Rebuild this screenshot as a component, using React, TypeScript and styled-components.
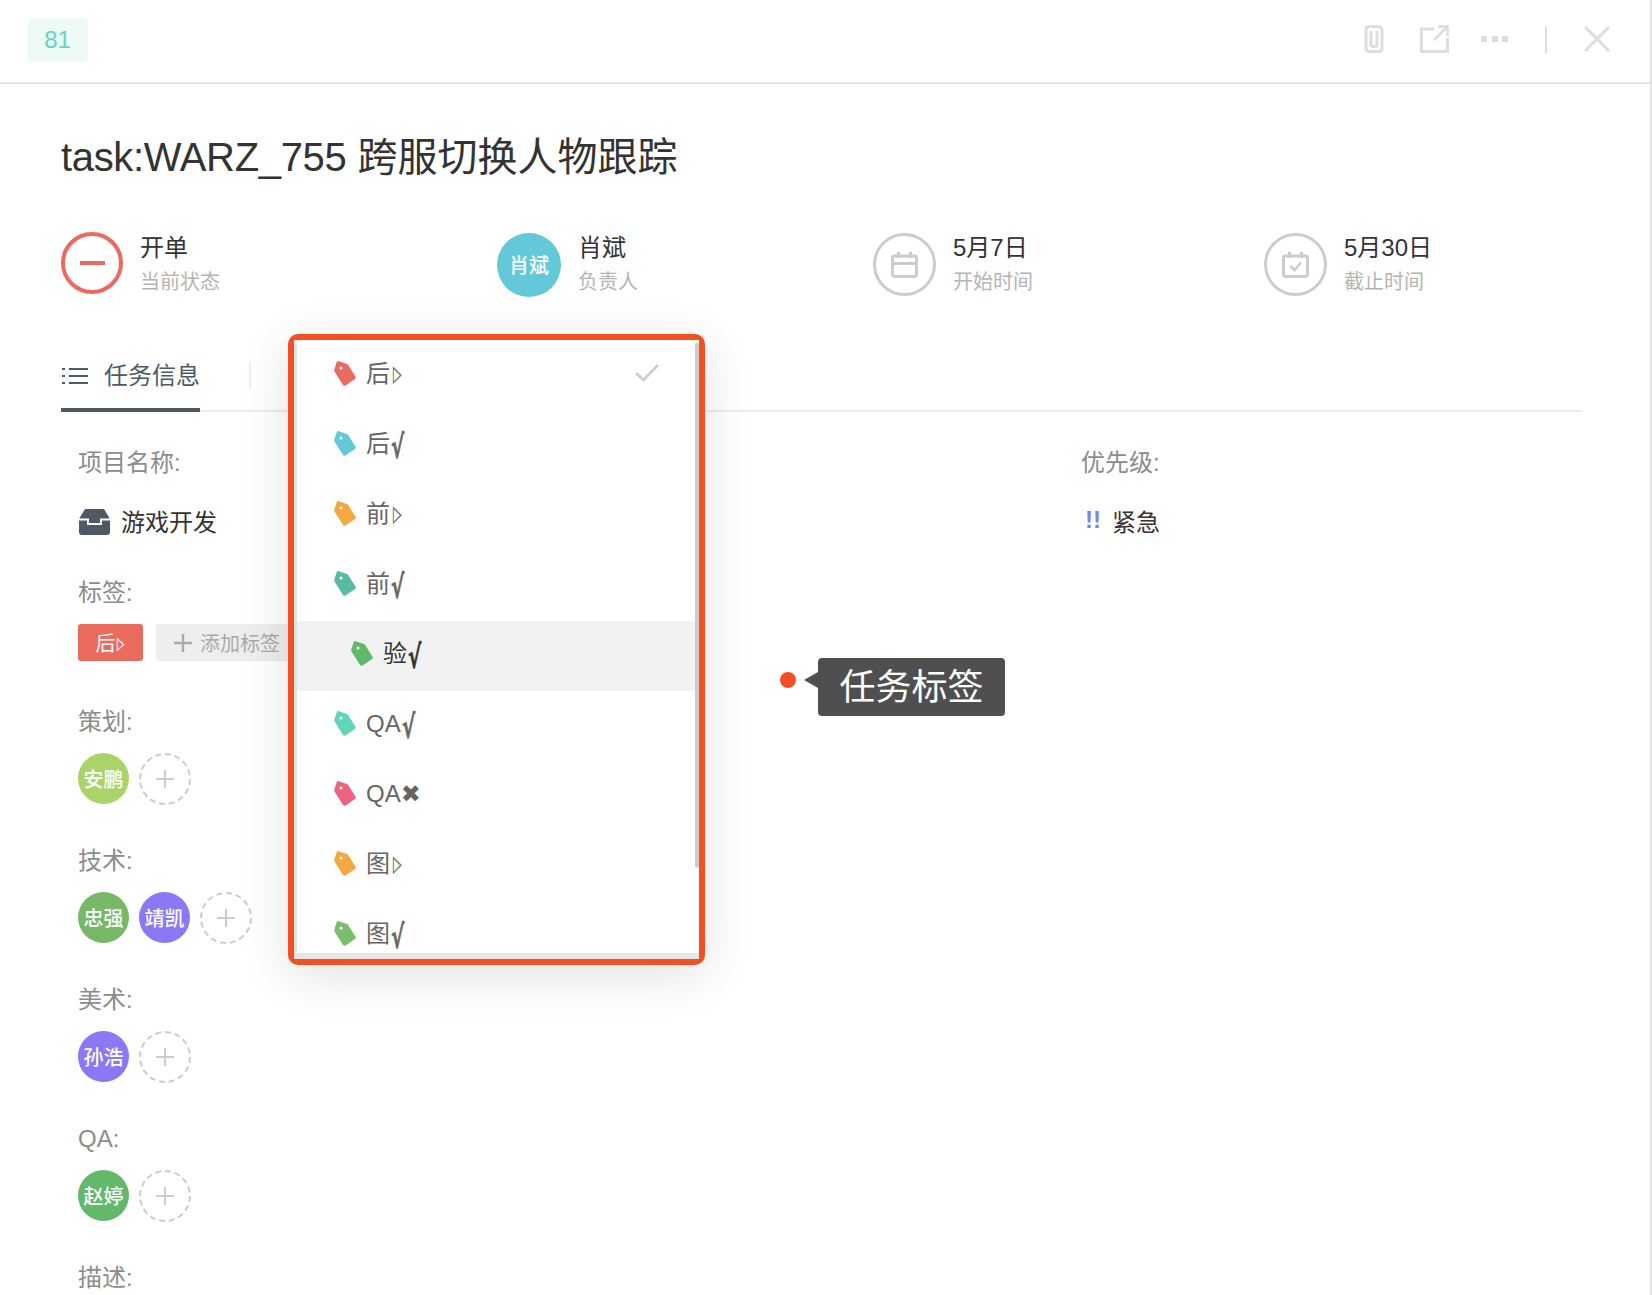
import React from "react";
import styled, { createGlobalStyle } from "styled-components";

const SANS = `"Liberation Sans", "Noto Sans CJK SC", sans-serif`;

const GlobalStyle = createGlobalStyle`
  html, body {
    margin: 0;
    height: 100%;
    overflow: hidden;
    background: #fff;
    font-family: ${SANS};
  }
  * { box-sizing: border-box; }
`;

type TagRow = {
  name: string;
  mark: "play" | "root" | "cross";
  color: string;
  active?: boolean;
  checked?: boolean;
};

const TAGS: TagRow[] = [
  { name: "后", mark: "play", color: "#eb6a5f", checked: true },
  { name: "后", mark: "root", color: "#63c9d9" },
  { name: "前", mark: "play", color: "#f5a741" },
  { name: "前", mark: "root", color: "#57bba3" },
  { name: "验", mark: "root", color: "#62b86b", active: true },
  { name: "QA", mark: "root", color: "#62d6bd" },
  { name: "QA", mark: "cross", color: "#ed6283" },
  { name: "图", mark: "play", color: "#f5a741" },
  { name: "图", mark: "root", color: "#7abd6a" },
];

const AVATAR_GREEN = "#62b86b";
const AVATAR_PURPLE = "#8a78f5";

function TagIcon({ color }: { color: string }) {
  return (
    <svg width="22" height="25" viewBox="0 0 22 25">
      <path
        d="M4 0 L13 3 Q13.6 3.2 14 3.8 L21.7 16 Q22.3 17.3 21 18 L11.5 24.5 Q10 25.2 9 24 L.5 10.5 Q0 9.5 .3 8.5 L2.8 .9 Q3.2 -.1 4 0Z"
        fill={color}
      />
      <circle cx="7" cy="7" r="1.5" fill="#fff" />
    </svg>
  );
}

function Mark({ kind }: { kind: TagRow["mark"] }) {
  if (kind === "play") return <PlayMark>▷</PlayMark>;
  if (kind === "root") return <RootMark>√</RootMark>;
  return <CrossMark>✖</CrossMark>;
}

function AddCircle() {
  return (
    <AddPerson>
      <svg width="20" height="20" viewBox="0 0 20 20">
        <path d="M10 1V19M1 10H19" stroke="#ccc" strokeWidth="2" />
      </svg>
    </AddPerson>
  );
}

export default function App() {
  return (
    <Page>
      <GlobalStyle />
      <Header>
        <IdBadge>81</IdBadge>
        <HeaderTools>
          <svg width="20" height="28" viewBox="0 0 20 28" fill="none" stroke="#ddd" strokeWidth="3">
            <path d="M7 6V20Q7 21.5 10 21.5T13 20V6" />
            <path d="M2 5Q2 1.5 5.5 1.5H13Q18 1.5 18 5V23Q18 26.5 14.500 26.500H5.500Q2 26.500 2 23Z" />
          </svg>
          <svg width="29" height="28" viewBox="0 0 29 28" fill="none" stroke="#ddd" strokeWidth="3">
            <path d="M14 4H1.500V26.500H27.500V13" />
            <path d="M14 15L27 2M18 1.500H27.500V11" strokeWidth="2.500" />
          </svg>
          <DotsIcon width="27" height="7" viewBox="0 0 27 7" fill="#ddd">
            <rect x="0" y="0" width="6" height="6" />
            <rect x="11" y="0" width="6" height="6" />
            <rect x="21" y="0" width="6" height="6" />
          </DotsIcon>
          <ToolDivider />
          <svg width="26" height="26" viewBox="0 0 26 26" fill="none" stroke="#ddd" strokeWidth="3">
            <path d="M1 1L25 25M25 1L1 25" />
          </svg>
        </HeaderTools>
      </Header>

      <Main>
        <Title>
          <TitleCode>task:WARZ_755</TitleCode> 跨服切换人物跟踪
        </Title>

        <Stats>
          <Stat $width={436}>
            <StatusRing>
              <StatusDash />
            </StatusRing>
            <div>
              <StatValue>开单</StatValue>
              <StatLabel>当前状态</StatLabel>
            </div>
          </Stat>
          <Stat $width={376}>
            <OwnerAvatar>肖斌</OwnerAvatar>
            <div>
              <StatValue>肖斌</StatValue>
              <StatLabel>负责人</StatLabel>
            </div>
          </Stat>
          <Stat $width={391}>
            <DateRing>
              <svg width="27" height="26" viewBox="0 0 27 26" fill="none" stroke="#ccc" strokeWidth="3">
                <path d="M3 4H24Q25.500 4 25.500 6V22Q25.500 24.500 23 24.500H4Q1.500 24.500 1.500 22V6Q1.500 4 3 4Z" />
                <path d="M1.500 11.500H25.500M7.500 0V6M19.500 0V6" />
              </svg>
            </DateRing>
            <div>
              <StatValue>5月7日</StatValue>
              <StatLabel>开始时间</StatLabel>
            </div>
          </Stat>
          <Stat $width={300}>
            <DateRing>
              <svg width="27" height="26" viewBox="0 0 27 26" fill="none" stroke="#ccc" strokeWidth="3">
                <path d="M3 4H24Q25.500 4 25.500 6V22Q25.500 24.500 23 24.500H4Q1.500 24.500 1.500 22V6Q1.500 4 3 4Z" />
                <path d="M7.500 0V6M19.500 0V6" />
                <path d="M8.500 14L12.500 18L19 10.500" strokeWidth="2.600" />
              </svg>
            </DateRing>
            <div>
              <StatValue>5月30日</StatValue>
              <StatLabel>截止时间</StatLabel>
            </div>
          </Stat>
        </Stats>

        <Tabs>
          <ActiveTab>
            <svg width="26" height="18" viewBox="0 0 26 18" fill="none" stroke="#4d5a66" strokeWidth="2">
              <path d="M7 2H26M7 9H26M7 16H26" />
              <path d="M0 2H3M0 9H3M0 16H3" />
            </svg>
            任务信息
          </ActiveTab>
          <TabDivider />
        </Tabs>

        <Fields>
          <FieldRow>
            <Field $gap={39}>
              <FieldLabel>项目名称:</FieldLabel>
              <ProjectValue>
                <ProjectIcon width="31" height="26" viewBox="0 0 31 26">
                  <path d="M6 0H25L31 10V23Q31 26 28 26H3Q0 26 0 23V10Z" fill="#4d5a66" />
                  <path d="M0 10.500H9V15H22V10.500H31" fill="none" stroke="#fff" strokeWidth="2" />
                </ProjectIcon>
                游戏开发
              </ProjectValue>
            </Field>
            <PriorityField>
              <FieldLabel>优先级:</FieldLabel>
              <ProjectValue>
                <Bangs>!!</Bangs>
                紧急
              </ProjectValue>
            </PriorityField>
          </FieldRow>

          <Field $gap={45}>
            <FieldLabel>标签:</FieldLabel>
            <TagLine>
              <TagChip>
                后<ChipMark>▷</ChipMark>
              </TagChip>
              <AddTag>
                <svg width="18" height="18" viewBox="0 0 18 18">
                  <path d="M9 0V18M0 9H18" stroke="#aaa" strokeWidth="2.400" />
                </svg>
                添加标签
              </AddTag>
            </TagLine>
          </Field>

          <Field>
            <FieldLabel>策划:</FieldLabel>
            <People>
              <Person $color="#a9d46a">安鹏</Person>
              <AddCircle />
            </People>
          </Field>
          <Field>
            <FieldLabel>技术:</FieldLabel>
            <People>
              <Person $color="#77b966">忠强</Person>
              <Person $color={AVATAR_PURPLE}>靖凯</Person>
              <AddCircle />
            </People>
          </Field>
          <Field>
            <FieldLabel>美术:</FieldLabel>
            <People>
              <Person $color={AVATAR_PURPLE}>孙浩</Person>
              <AddCircle />
            </People>
          </Field>
          <Field>
            <FieldLabel>QA:</FieldLabel>
            <People>
              <Person $color={AVATAR_GREEN}>赵婷</Person>
              <AddCircle />
            </People>
          </Field>
          <Field>
            <FieldLabel>描述:</FieldLabel>
          </Field>
        </Fields>
      </Main>

      <Highlight>
        <Menu>
          <Scrollbar />
          {TAGS.map((tag, i) => (
            <MenuRow key={i} $active={tag.active}>
              <TagIcon color={tag.color} />
              <RowText>
                {tag.name}
                <Mark kind={tag.mark} />
              </RowText>
              {tag.checked && (
                <RowCheck width="24" height="18" viewBox="0 0 24 18" fill="none" stroke="#ccc" strokeWidth="2.600">
                  <path d="M1 9L8.500 16L23 1" />
                </RowCheck>
              )}
            </MenuRow>
          ))}
        </Menu>
      </Highlight>

      <Callout>
        <CalloutDot />
        <CalloutBox>任务标签</CalloutBox>
      </Callout>
    </Page>
  );
}

// ---------- Styled Components ----------

const Page = styled.div`
  position: relative;
  width: 1652px;
  height: 1295px;
  overflow: hidden;
  border-right: 2px solid #e3e3e3;
  background: #fff;
`;

const Header = styled.header`
  display: flex;
  align-items: center;
  justify-content: space-between;
  height: 84px;
  padding: 0 40px 4px 27px;
  border-bottom: 2px solid #e3e3e3;
`;

const IdBadge = styled.div`
  width: 61px;
  height: 44px;
  margin-top: 2px;
  border-radius: 4px;
  background: #eefaf6;
  color: #62d6bd;
  font-size: 24px;
  line-height: 44px;
  text-align: center;
`;

const HeaderTools = styled.div`
  display: flex;
  align-items: center;
  gap: 36px;
`;

const DotsIcon = styled.svg`
  margin: 0 1px 0 -4px;
`;

const ToolDivider = styled.div`
  width: 2px;
  height: 27px;
  margin-right: 1px;
  background: #ddd;
`;

const Main = styled.main`
  padding: 45px 68px 0 61px;
`;

const Title = styled.h1`
  margin: 0 0 47px;
  color: #333;
  font-size: 40px;
  font-weight: 400;
  line-height: 56px;
`;

const TitleCode = styled.span`
  letter-spacing: -0.33px;
`;

const Stats = styled.div`
  display: flex;
  margin-bottom: 43px;
`;

const Stat = styled.div<{ $width: number }>`
  display: flex;
  align-items: center;
  gap: 17px;
  width: ${({ $width }) => $width}px;
  height: 65px;
`;

const StatValue = styled.div`
  color: #333;
  font-size: 24px;
  line-height: 33px;
`;

const StatLabel = styled.div`
  margin-top: 2px;
  color: #b4b4b4;
  font-size: 20px;
  line-height: 33px;
`;

const StatusRing = styled.div`
  display: flex;
  align-items: center;
  justify-content: center;
  flex: none;
  width: 62px;
  height: 62px;
  margin-bottom: 4px;
  border: 4px solid #eb6a5f;
  border-radius: 50%;
`;

const StatusDash = styled.div`
  width: 25px;
  height: 4px;
  background: #eb6a5f;
`;

const OwnerAvatar = styled.div`
  display: flex;
  align-items: center;
  justify-content: center;
  flex: none;
  width: 64px;
  height: 64px;
  border-radius: 50%;
  background: #63c9d9;
  color: #fff;
  font-size: 20px;
  font-weight: 500;
`;

const DateRing = styled.div`
  display: flex;
  align-items: center;
  justify-content: center;
  flex: none;
  width: 63px;
  height: 63px;
  border: 3px solid #ccc;
  border-radius: 50%;
`;

const Tabs = styled.div`
  display: flex;
  align-items: flex-start;
  height: 72px;
  padding-top: 20px;
  border-bottom: 2px solid #eee;
`;

const ActiveTab = styled.div`
  display: flex;
  align-items: center;
  gap: 16px;
  width: 139px;
  height: 52px;
  padding: 0 0 16px 1px;
  border-bottom: 4px solid #4d5a66;
  color: #4d5a66;
  font-size: 24px;
  line-height: 32px;
  white-space: nowrap;
`;

const TabDivider = styled.div`
  width: 2px;
  height: 26px;
  margin: 2px 0 0 49px;
  background: #eee;
`;

const Fields = styled.div`
  padding: 35px 0 0 17px;
`;

const FieldRow = styled.div`
  display: flex;
`;

const Field = styled.section<{ $gap?: number }>`
  margin-bottom: ${({ $gap = 40 }) => $gap}px;
`;

const PriorityField = styled.section`
  margin-left: 864px;
`;

const FieldLabel = styled.div`
  height: 32px;
  margin-bottom: 23px;
  color: #8c8c8c;
  font-size: 24px;
  line-height: 32px;

  & + ${() => People}, & + ${() => TagLine} {
    margin-top: -8px;
  }
`;

const ProjectValue = styled.div`
  display: flex;
  align-items: center;
  gap: 11px;
  height: 36px;
  color: #333;
  font-size: 24px;
`;

const ProjectIcon = styled.svg`
  margin: 4px 0 0 1px;
`;

const Bangs = styled.span`
  margin-left: 4px;
  color: #7b83ee;
  font-size: 24px;
  font-weight: 700;
`;

const TagLine = styled.div`
  display: flex;
  gap: 13px;
  height: 37px;
`;

const TagChip = styled.div`
  display: flex;
  align-items: center;
  justify-content: center;
  width: 65px;
  border-radius: 3px;
  background: #ea6a5e;
  color: #fff;
  font-size: 20px;
`;

const ChipMark = styled.span`
  display: inline-block;
  width: 9px;
  margin-left: 1px;
  font-family: "DejaVu Sans", sans-serif;
  font-size: 17px;
  -webkit-text-stroke: 0.4px #fff;
  transform: scaleX(0.55);
  transform-origin: left center;
`;

const AddTag = styled.div`
  display: flex;
  align-items: center;
  gap: 8px;
  width: 160px;
  padding-left: 18px;
  border-radius: 3px;
  background: #eee;
  color: #aaa;
  font-size: 20px;
`;

const People = styled.div`
  display: flex;
  gap: 10px;
`;

const Person = styled.div<{ $color: string }>`
  display: flex;
  align-items: center;
  justify-content: center;
  width: 51px;
  height: 51px;
  border-radius: 50%;
  background: ${({ $color }) => $color};
  color: #fff;
  font-size: 20px;
  font-weight: 500;
`;

const AddPerson = styled.div`
  display: flex;
  align-items: center;
  justify-content: center;
  width: 52px;
  height: 52px;
  border: 2px dashed #ccc;
  border-radius: 50%;
`;

const Highlight = styled.div`
  position: absolute;
  top: 334px;
  left: 288px;
  width: 417px;
  height: 631px;
  border: 6px solid #f15025;
  border-radius: 10px;
  background: #fff;
  box-shadow: 0 10px 50px rgba(0, 0, 0, 0.12);
`;

const Menu = styled.div`
  position: relative;
  height: 100%;
  padding-top: 1px;
  overflow: hidden;
  border-left: 3px solid #e4e4e4;
  border-bottom: 6px solid #e6e6e6;
  background: #fff;
`;

const Scrollbar = styled.div`
  position: absolute;
  top: 3px;
  right: 0;
  z-index: 1;
  width: 4px;
  height: 525px;
  border-radius: 0 0 2px 2px;
  background: #ccc;
`;

const MenuRow = styled.div<{ $active?: boolean }>`
  display: flex;
  align-items: center;
  gap: 10px;
  height: 70px;
  padding: 0 40px 6px ${({ $active }) => ($active ? 54 : 37)}px;
  background: ${({ $active }) => ($active ? "#f2f2f2" : "#fff")};
  color: ${({ $active }) => ($active ? "#333" : "#666")};
`;

const RowText = styled.span`
  display: flex;
  align-items: center;
  padding-top: 2px;
  font-size: 24px;
  line-height: 32px;
`;

const PlayMark = styled.span`
  display: inline-block;
  width: 11px;
  margin-left: 3px;
  font-family: "DejaVu Sans", sans-serif;
  font-size: 22px;
  -webkit-text-stroke: 0.4px currentColor;
  transform: scaleX(0.5);
  transform-origin: left center;
`;

const RootMark = styled.span`
  display: inline-block;
  width: 13px;
  margin: 0 0 0 1px;
  font-family: "DejaVu Sans", sans-serif;
  font-size: 32px;
  font-weight: 700;
  line-height: 32px;
  -webkit-text-stroke: 0.6px currentColor;
  transform: translateY(3px) scaleX(0.62);
  transform-origin: left center;
`;

const CrossMark = styled.span`
  font-family: "DejaVu Sans", sans-serif;
  font-size: 24px;
`;

const RowCheck = styled.svg`
  margin-left: auto;
`;

const Callout = styled.div`
  position: absolute;
  top: 658px;
  left: 780px;
  display: flex;
  align-items: flex-start;
`;

const CalloutDot = styled.div`
  width: 16px;
  height: 16px;
  margin: 14px 22px 0 0;
  border-radius: 50%;
  background: #f15025;
`;

const CalloutBox = styled.div`
  position: relative;
  width: 187px;
  height: 58px;
  border-radius: 4px;
  background: #4f4f4f;
  color: #fff;
  font-size: 36px;
  line-height: 60px;
  text-align: center;

  &::before {
    content: "";
    position: absolute;
    top: 14px;
    left: -14px;
    border-top: 8px solid transparent;
    border-bottom: 8px solid transparent;
    border-right: 14px solid #4f4f4f;
  }
`;
